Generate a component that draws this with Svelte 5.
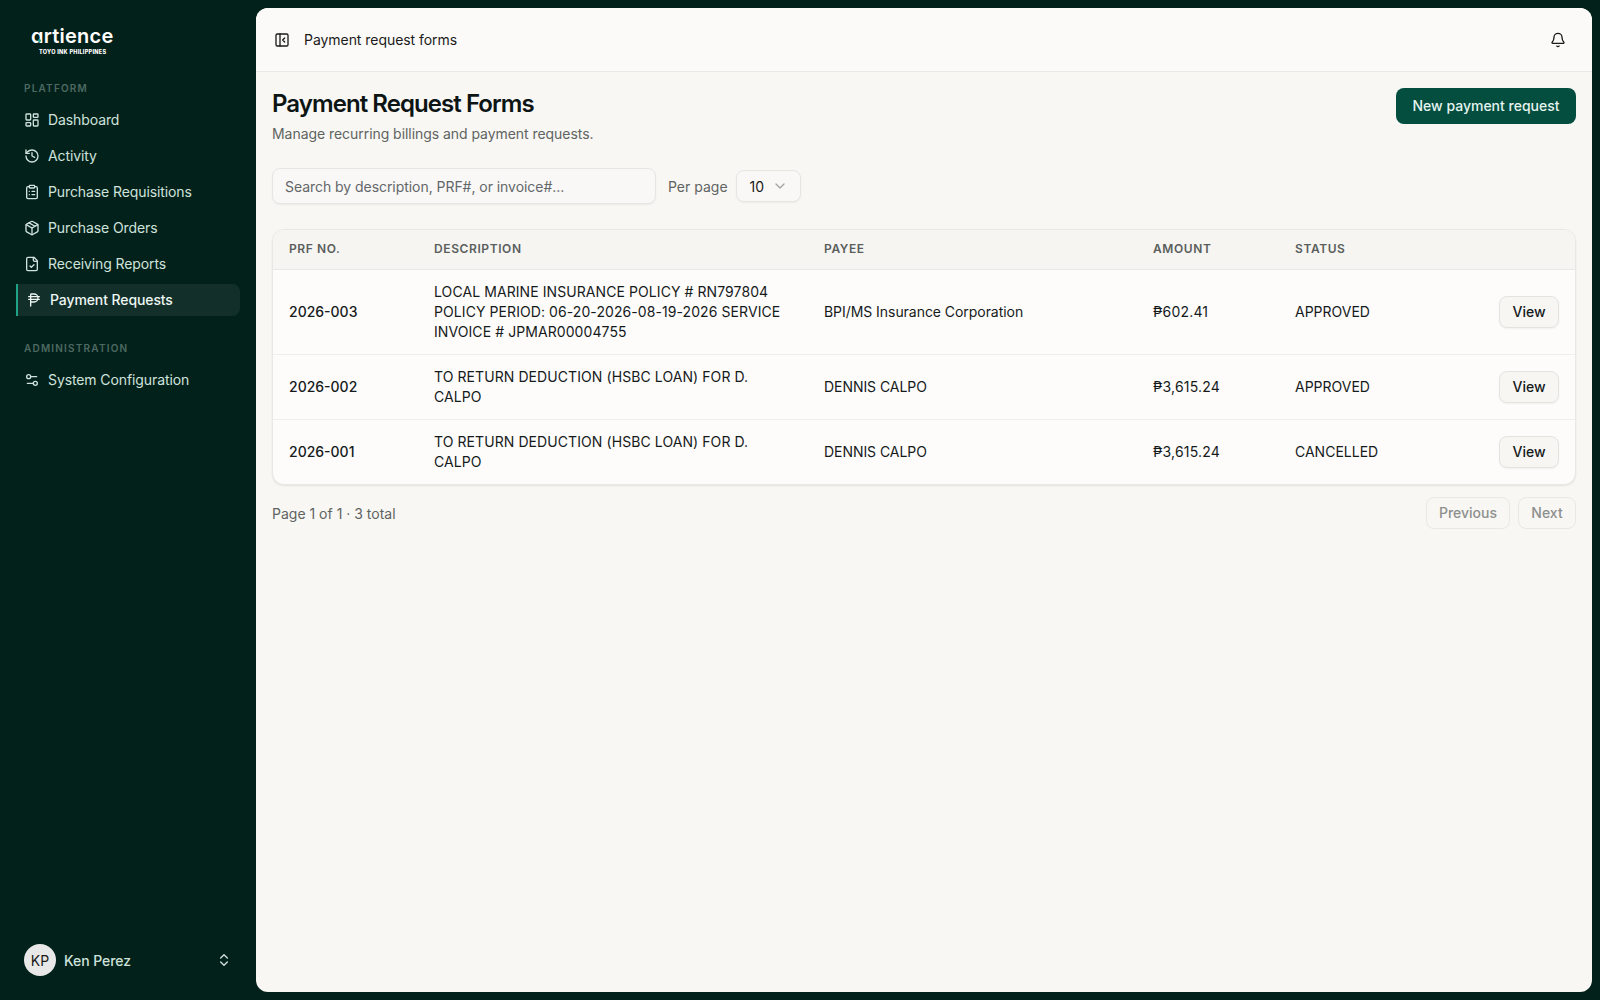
<script>
  const platform = [
    { label: 'Dashboard', icon: 'dash' },
    { label: 'Activity', icon: 'history' },
    { label: 'Purchase Requisitions', icon: 'clip' },
    { label: 'Purchase Orders', icon: 'box' },
    { label: 'Receiving Reports', icon: 'file' },
    { label: 'Payment Requests', icon: 'peso', active: true }
  ];

  const rows = [
    { no: '2026-003', desc: 'LOCAL MARINE INSURANCE POLICY # RN797804 POLICY PERIOD: 06-20-2026-08-19-2026 SERVICE INVOICE # JPMAR00004755', payee: 'BPI/MS Insurance Corporation', amount: '₱602.41', status: 'APPROVED' },
    { no: '2026-002', desc: 'TO RETURN DEDUCTION (HSBC LOAN) FOR D. CALPO', payee: 'DENNIS CALPO', amount: '₱3,615.24', status: 'APPROVED' },
    { no: '2026-001', desc: 'TO RETURN DEDUCTION (HSBC LOAN) FOR D. CALPO', payee: 'DENNIS CALPO', amount: '₱3,615.24', status: 'CANCELLED' }
  ];
</script>

{#snippet icon(name)}
  <svg class="nav-icon" xmlns="http://www.w3.org/2000/svg" width="16" height="16" viewBox="0 0 24 24" fill="none" stroke="currentColor" stroke-width="2" stroke-linecap="round" stroke-linejoin="round" aria-hidden="true">
    {#if name === 'dash'}
      <rect x="3" y="3" width="7" height="9" rx="1"/><rect x="14" y="3" width="7" height="5" rx="1"/><rect x="14" y="12" width="7" height="9" rx="1"/><rect x="3" y="16" width="7" height="5" rx="1"/>
    {:else if name === 'history'}
      <path d="M3 12a9 9 0 1 0 9-9 9.75 9.75 0 0 0-6.74 2.74L3 8"/><path d="M3 3v5h5"/><path d="M12 7v5l4 2"/>
    {:else if name === 'clip'}
      <rect x="8" y="2" width="8" height="4" rx="1"/><path d="M16 4h2a2 2 0 0 1 2 2v14a2 2 0 0 1-2 2H6a2 2 0 0 1-2-2V6a2 2 0 0 1 2-2h2"/><path d="M12 11h4"/><path d="M12 16h4"/><path d="M8 11h.01"/><path d="M8 16h.01"/>
    {:else if name === 'box'}
      <path d="M11 21.73a2 2 0 0 0 2 0l7-4A2 2 0 0 0 21 16V8a2 2 0 0 0-1-1.73l-7-4a2 2 0 0 0-2 0l-7 4A2 2 0 0 0 3 8v8a2 2 0 0 0 1 1.73z"/><path d="M12 22V12"/><path d="M3.29 7 12 12l8.71-5"/><path d="m7.5 4.27 9 5.15"/>
    {:else if name === 'file'}
      <path d="M15 2H6a2 2 0 0 0-2 2v16a2 2 0 0 0 2 2h12a2 2 0 0 0 2-2V7z"/><path d="M14 2v4a2 2 0 0 0 2 2h4"/><path d="m9 15 2 2 4-4"/>
    {:else if name === 'peso'}
      <path d="M20 11H4"/><path d="M20 7H4"/><path d="M7 21V4a1 1 0 0 1 1-1h4a1 1 0 0 1 0 12H7"/>
    {:else if name === 'config'}
      <path d="M14 17H5"/><path d="M19 7h-9"/><circle cx="17" cy="17" r="3"/><circle cx="7" cy="7" r="3"/>
    {/if}
  </svg>
{/snippet}

<div class="shell">
  <aside class="sidebar">
    <div class="logo">
      <div class="wordmark">artience<i class="dot"></i></div>
      <div class="tagline">TOYO INK PHILIPPINES</div>
    </div>

    <div class="group">
      <div class="group-label">PLATFORM</div>
      <nav>
        {#each platform as item}
          <div class="nav-item" class:active={item.active}>
            {@render icon(item.icon)}
            <span>{item.label}</span>
          </div>
        {/each}
      </nav>
    </div>

    <div class="group">
      <div class="group-label">ADMINISTRATION</div>
      <nav>
        <div class="nav-item">
          {@render icon('config')}
          <span>System Configuration</span>
        </div>
      </nav>
    </div>

    <div class="user">
      <div class="avatar">KP</div>
      <span class="user-name">Ken Perez</span>
      <svg xmlns="http://www.w3.org/2000/svg" width="16" height="16" viewBox="0 0 24 24" fill="none" stroke="currentColor" stroke-width="2" stroke-linecap="round" stroke-linejoin="round" aria-hidden="true">
        <path d="m7 15 5 5 5-5"/><path d="m7 9 5-5 5 5"/>
      </svg>
    </div>
  </aside>

  <main class="panel">
    <header class="topbar">
      <svg xmlns="http://www.w3.org/2000/svg" width="16" height="16" viewBox="0 0 24 24" fill="none" stroke="currentColor" stroke-width="2" stroke-linecap="round" stroke-linejoin="round" aria-hidden="true">
        <rect width="18" height="18" x="3" y="3" rx="2"/><path d="M9 3v18"/><path d="m16 15-3-3 3-3"/>
      </svg>
      <span class="crumb">Payment request forms</span>
      <svg class="bell" xmlns="http://www.w3.org/2000/svg" width="16" height="16" viewBox="0 0 24 24" fill="none" stroke="currentColor" stroke-width="2" stroke-linecap="round" stroke-linejoin="round" aria-hidden="true">
        <path d="M10.268 21a2 2 0 0 0 3.464 0"/><path d="M3.262 15.326A1 1 0 0 0 4 17h16a1 1 0 0 0 .74-1.673C19.41 13.956 18 12.499 18 8A6 6 0 0 0 6 8c0 4.499-1.411 5.956-2.738 7.326"/>
      </svg>
    </header>

    <div class="content">
      <div class="page-head">
        <div>
          <h1>Payment Request Forms</h1>
          <p>Manage recurring billings and payment requests.</p>
        </div>
        <button type="button" class="primary">New payment request</button>
      </div>

      <div class="filters">
        <div class="search">Search by description, PRF#, or invoice#...</div>
        <span class="per-page">Per page</span>
        <div class="select">
          <span>10</span>
          <svg xmlns="http://www.w3.org/2000/svg" width="16" height="16" viewBox="0 0 24 24" fill="none" stroke="currentColor" stroke-width="2" stroke-linecap="round" stroke-linejoin="round" aria-hidden="true"><path d="m6 9 6 6 6-6"/></svg>
        </div>
      </div>

      <div class="table-card">
        <table>
          <thead>
            <tr>
              <th class="c-no">PRF NO.</th>
              <th class="c-desc">DESCRIPTION</th>
              <th class="c-payee">PAYEE</th>
              <th class="c-amount">AMOUNT</th>
              <th class="c-status">STATUS</th>
              <th></th>
            </tr>
          </thead>
          <tbody>
            {#each rows as row}
              <tr>
                <td class="no">{row.no}</td>
                <td class="desc">{row.desc}</td>
                <td class="payee">{row.payee}</td>
                <td class="num">{row.amount}</td>
                <td>{row.status}</td>
                <td class="action"><button type="button" class="view">View</button></td>
              </tr>
            {/each}
          </tbody>
        </table>
      </div>

      <div class="pager">
        <span>Page 1 of 1 · 3 total</span>
        <div class="pager-btns">
          <button type="button" disabled>Previous</button>
          <button type="button" disabled>Next</button>
        </div>
      </div>
    </div>
  </main>
</div>

<style>
  :global(body) {
    margin: 0;
    background: #03211b;
    font-family: Inter, "Liberation Sans", sans-serif;
  }
  .shell {
    display: flex;
    height: 1000px;
    overflow: hidden;
    background: #03211b;
  }
  .sidebar {
    width: 256px;
    flex: none;
    display: flex;
    flex-direction: column;
    box-sizing: border-box;
    padding: 0 16px;
    color: #cfe3dc;
  }
  .logo {
    height: 72px;
    box-sizing: border-box;
    padding: 26px 0 0 15px;
    color: #fff;
  }
  .wordmark {
    position: relative;
    font-size: 20px;
    line-height: 21px;
    font-weight: 600;
    font-feature-settings: "cv11";
    letter-spacing: 0.012em;
  }
  .dot {
    position: absolute;
    left: 7px;
    top: 13px;
    width: 3px;
    height: 3px;
    border-radius: 50%;
    background: #1fa387;
  }
  .tagline {
    font-size: 5.5px;
    line-height: 8px;
    font-weight: 800;
    margin: 1px 0 0 8px;
    letter-spacing: 0.05em;
  }
  .group {
    padding-top: 8px;
    margin-bottom: 16px;
  }
  .group-label {
    height: 16px;
    line-height: 16px;
    font-size: 10px;
    font-weight: 600;
    letter-spacing: 0.12em;
    color: #4d6a62;
    padding-left: 8px;
    margin-bottom: 8px;
  }
  nav {
    display: flex;
    flex-direction: column;
    gap: 4px;
  }
  .nav-item {
    height: 32px;
    display: flex;
    align-items: center;
    gap: 8px;
    padding-left: 8px;
    font-size: 14px;
    letter-spacing: -0.1px;
    color: #cfe3dc;
    border-radius: 0 8px 8px 0;
    box-sizing: border-box;
  }
  .nav-item span { padding-bottom: 2px; }
  .nav-icon { flex: none; }
  .nav-item.active {
    background: #132f2a;
    border-left: 2px solid #1fa387;
    font-weight: 500;
    color: #eef7f4;
  }
  .user {
    margin-top: auto;
    height: 32px;
    padding: 0 8px 24px;
    display: flex;
    align-items: center;
    gap: 8px;
    font-size: 14px;
  }
  .avatar {
    width: 32px;
    height: 32px;
    border-radius: 50%;
    background: #e8e8e8;
    color: #1a1a1a;
    display: flex;
    align-items: center;
    justify-content: center;
    font-size: 14px;
  }
  .user-name {
    flex: 1;
    font-weight: 500;
    letter-spacing: -0.05px;
  }
  .panel {
    flex: 1;
    margin: 8px 8px 8px 0;
    background: #f8f7f4;
    border-radius: 12px;
    overflow: hidden;
  }
  .topbar {
    height: 63px;
    display: flex;
    align-items: center;
    gap: 14px;
    padding: 0 18px;
    background: #fbfaf8;
    border-bottom: 1px solid #e9e8e4;
    color: #1b1b1b;
  }
  .crumb { font-size: 14px; letter-spacing: -0.05px; }
  .bell { margin-left: auto; margin-right: 8px; }
  .content { padding: 16px; }
  .page-head {
    display: flex;
    justify-content: space-between;
    align-items: flex-start;
  }
  h1 {
    margin: 0;
    font-size: 24px;
    line-height: 32px;
    font-weight: 600;
    letter-spacing: -0.039em;
    color: #0d1414;
  }
  p {
    margin: 4px 0 0;
    font-size: 14px;
    line-height: 20px;
    letter-spacing: -0.05px;
    color: #5f6461;
  }
  .primary {
    height: 36px;
    width: 180px;
    border: none;
    border-radius: 8px;
    background: #034e3f;
    color: #e6f4ef;
    font: 500 14px Inter, sans-serif;
    padding: 0 0 2px;
  }
  .filters {
    display: flex;
    align-items: center;
    gap: 12px;
    margin-top: 24px;
  }
  .search {
    width: 384px;
    height: 36px;
    box-sizing: border-box;
    padding: 0 12px;
    display: flex;
    align-items: center;
    border: 1px solid #e6e5e1;
    border-radius: 8px;
    background: #f9f8f6;
    box-shadow: 0 1px 2px rgba(0, 0, 0, 0.05);
    font-size: 14px;
    letter-spacing: -0.05px;
    color: #63676a;
  }
  .per-page {
    font-size: 14px;
    color: #5f6461;
    margin-right: -4px;
  }
  .select {
    width: 65px;
    height: 32px;
    box-sizing: border-box;
    padding: 0 12px 0 13px;
    display: flex;
    align-items: center;
    justify-content: space-between;
    border: 1px solid #e6e5e1;
    border-radius: 8px;
    background: #f9f8f6;
    box-shadow: 0 1px 2px rgba(0, 0, 0, 0.05);
    font-size: 14px;
    color: #1b1b1b;
  }
  .select svg { color: #a3a5a3; }
  .table-card {
    margin-top: 25px;
    border: 1px solid #e9e8e4;
    border-radius: 12px;
    background: #fdfcfb;
    box-shadow: 0 1px 2px rgba(0, 0, 0, 0.08);
    overflow: hidden;
  }
  table {
    width: 100%;
    border-collapse: collapse;
    table-layout: fixed;
  }
  thead tr { background: #f6f5f2; }
  th {
    height: 37px;
    padding: 0 16px 2px;
    text-align: left;
    font-size: 12px;
    font-weight: 600;
    letter-spacing: 0.05em;
    color: #5a5e5c;
    border-bottom: 1px solid #e9e8e4;
  }
  .c-no { width: 145px; box-sizing: border-box; }
  .c-desc { width: 390px; box-sizing: border-box; }
  .c-payee { width: 329px; box-sizing: border-box; }
  .c-amount { width: 142px; box-sizing: border-box; }
  .c-status { width: 140px; box-sizing: border-box; }
  td {
    padding: 12px 16px;
    font-size: 14px;
    line-height: 20px;
    color: #151a1a;
    border-bottom: 1px solid #efeeeb;
  }
  tbody tr:last-child td { border-bottom: none; }
  .no { font-weight: 500; }
  .desc { letter-spacing: 0.08px; }
  .payee { letter-spacing: -0.05px; }
  .num { letter-spacing: 0.2px; }
  .action { text-align: right; padding: 0 16px; }
  .view {
    width: 60px;
    height: 32px;
    border: 1px solid #e4e3df;
    border-radius: 8px;
    background: #f7f6f3;
    box-shadow: 0 1px 2px rgba(0, 0, 0, 0.05);
    color: #151a1a;
    font: 500 14px Inter, sans-serif;
    padding: 0 0 2px;
  }
  .pager {
    display: flex;
    justify-content: space-between;
    align-items: center;
    margin-top: 12px;
    font-size: 14px;
    color: #5f6461;
  }
  .pager-btns { display: flex; gap: 8px; }
  .pager-btns button {
    height: 32px;
    width: 84px;
    padding: 0 0 2px;
    border: 1px solid #e9e8e4;
    border-radius: 8px;
    background: #f8f7f4;
    color: #8d8f8d;
    font: 500 14px Inter, sans-serif;
  }
  .pager-btns button:last-child { width: 58px; }
</style>
